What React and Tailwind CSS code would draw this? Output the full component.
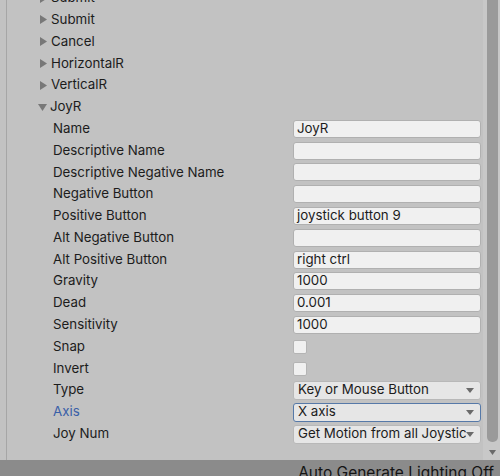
import React from "react";

const font = { fontFamily: "Inter, 'Noto Sans', sans-serif" };

function Right() {
  return (
    <svg width="7" height="9" viewBox="0 0 7 9" className="shrink-0">
      <polygon points="0,0 7,4.5 0,9" fill="#787878" />
    </svg>
  );
}
function Down() {
  return (
    <svg width="9" height="7" viewBox="0 0 9 7" className="shrink-0">
      <polygon points="0,0 9,0 4.5,7" fill="#787878" />
    </svg>
  );
}
function Caret() {
  return (
    <svg width="8" height="5" viewBox="0 0 8 5" className="shrink-0">
      <polygon points="0,0 8,0 4,5" fill="#6a6a6a" />
    </svg>
  );
}

const tree = ["Submit", "Submit", "Cancel", "HorizontalR", "VerticalR"];

const fields = [
  ["Name", "text", "JoyR"],
  ["Descriptive Name", "text", ""],
  ["Descriptive Negative Name", "text", ""],
  ["Negative Button", "text", ""],
  ["Positive Button", "text", "joystick button 9"],
  ["Alt Negative Button", "text", ""],
  ["Alt Positive Button", "text", "right ctrl"],
  ["Gravity", "text", "1000"],
  ["Dead", "text", "0.001"],
  ["Sensitivity", "text", "1000"],
  ["Snap", "check", ""],
  ["Invert", "check", ""],
  ["Type", "drop", "Key or Mouse Button"],
  ["Axis", "dropsel", "X axis"],
  ["Joy Num", "drop", "Get Motion from all Joysticks"],
];

function Field({ kind, value }) {
  if (kind === "check")
    return <div className="w-[14px] h-[14px] rounded-[2px] bg-[#f0f0f0] border border-[#b4b4b4]" />;
  if (kind === "text")
    return (
      <div className="w-[188px] h-[18px] rounded-[3px] bg-[#f0f0f0] border border-[#b0b0b0] flex items-center px-[3px] text-[#1c1c1c] overflow-hidden whitespace-nowrap">
        {value}
      </div>
    );
  const sel = kind === "dropsel";
  return (
    <div
      className={
        "w-[188px] h-[19px] rounded-[3px] flex items-center pl-[4px] pr-[6px] text-[#1c1c1c] overflow-hidden whitespace-nowrap " +
        (sel ? "bg-[#e6e6e6] border border-[#5679a8]" : "bg-[#e6e6e6] border border-[#b8b8b8]")
      }
    >
      <span className="flex-1 min-w-0 overflow-hidden">{value}</span>
      <Caret />
    </div>
  );
}

export default function App() {
  return (
    <div className="w-[500px] h-[476px] bg-[#c2c2c2] flex flex-col overflow-hidden" style={font}>
      <div className="flex-1 flex min-h-0">
        <div className="flex-1 min-w-0 pl-[6px]">
          <div className="h-full border-l border-[#a6a6a6] overflow-hidden">
            <div className="mt-[-12.8px] text-[13.3px] text-[#1c1c1c]">
              {tree.map((t, i) => (
                <div key={i} className="h-[21.8px] flex items-center pl-[33px] gap-[4px]">
                  <Right />
                  <span>{t}</span>
                </div>
              ))}
              <div className="h-[21.8px] flex items-center pl-[31px] gap-[3px]">
                <Down />
                <span>JoyR</span>
              </div>
              {fields.map(([label, kind, value]) => (
                <div key={label} className="h-[21.8px] flex items-center">
                  <span
                    className={
                      "w-[286px] pl-[46px] whitespace-nowrap " +
                      (label === "Axis" ? "text-[#3a5fa8]" : "")
                    }
                  >
                    {label}
                  </span>
                  <Field kind={kind} value={value} />
                </div>
              ))}
            </div>
          </div>
        </div>
        <div className="w-[17px] bg-[#c8c8c8] flex flex-col items-start pl-[4px] pr-[2px]">
          <div className="w-[11px] flex-1 bg-[#9a9a9a] rounded-b-[5px] mb-[3px]" />
          <div className="h-[15px] w-[11px] flex items-center justify-center">
            <svg width="7" height="5" viewBox="0 0 7 5">
              <polygon points="0,0 7,0 3.5,5" fill="#6a6a6a" />
            </svg>
          </div>
        </div>
      </div>
      <div className="h-[16px] bg-[#8b8b8b] flex justify-end pr-[6px] text-[15.5px] text-[#141414] leading-none pt-[5px] whitespace-nowrap overflow-hidden">
        Auto Generate Lighting Off
      </div>
    </div>
  );
}
